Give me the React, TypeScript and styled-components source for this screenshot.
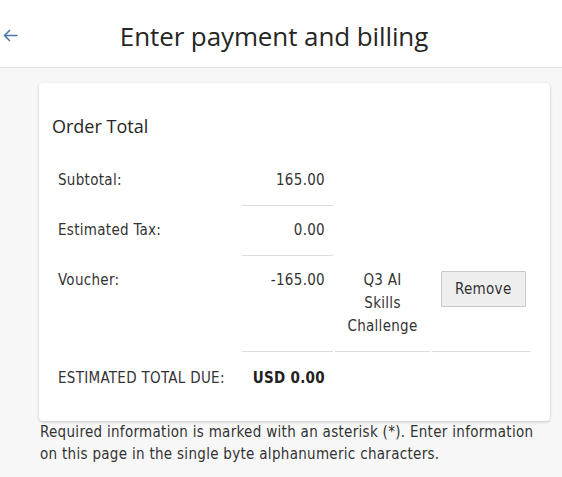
import React from "react";
import styled, { createGlobalStyle } from "styled-components";

const Global = createGlobalStyle`
  html, body { margin: 0; padding: 0; background: #f7f7f7; }
  body {
    font-family: "DejaVu Sans Condensed", "DejaVu Sans", sans-serif;
    letter-spacing: 0.3px;
    color: #333;
  }
`;

const Header = styled.header`
  box-sizing: border-box;
  height: 68px;
  padding-top: 4px;
  background: #fff;
  border-bottom: 1px solid #e2e2e2;
  display: flex;
  align-items: center;
`;

const BackButton = styled.button`
  border: 0;
  background: none;
  padding: 0;
  margin: 0 0 0 3px;
  width: 15px;
  height: 16px;
  display: flex;
  align-items: center;
  justify-content: center;
  cursor: pointer;
  color: #4b79a6;
`;

const Title = styled.h1`
  flex: 1;
  margin: 0 0 0 -18px;
  padding-right: 14px;
  text-align: center;
  font-family: "Open Sans", "Noto Sans", sans-serif;
  font-weight: 400;
  font-size: 26px;
  letter-spacing: -0.1px;
  color: #262626;
`;

const Main = styled.main`
  padding: 15px 12px 20px 39px;
`;

const Card = styled.section`
  background: #fff;
  border-radius: 4px;
  box-shadow: 0 1px 3px rgba(0, 0, 0, 0.22);
  padding: 29px 16px 15px 13px;
`;

const CardTitle = styled.h2`
  margin: 0 0 16px 0;
  font-family: "Open Sans", "Noto Sans", sans-serif;
  font-weight: 400;
  font-size: 18px;
  line-height: 28px;
  letter-spacing: 0;
  color: #262626;
`;

const Table = styled.table`
  border-collapse: separate;
  border-spacing: 2px;
  table-layout: fixed;
  width: 481px;
  font-size: 15px;
  line-height: 23px;
  color: #333;
`;

const Cell = styled.td<{ $ruled?: boolean; $align?: "left" | "right" | "center"; $w?: number }>`
  box-sizing: border-box;
  padding: 11px 8px 13px ${(p) => (p.$align === "center" ? "8px" : "4px")};
  vertical-align: top;
  text-align: ${(p) => p.$align || "left"};
  border-bottom: 1px solid ${(p) => (p.$ruled ? "#dedede" : "transparent")};
  ${(p) => (p.$w ? `width: ${p.$w}px;` : "")}
`;

const TotalCell = styled(Cell)`
  padding-top: 13px;
`;

const Strong = styled.strong`
  font-weight: 700;
  color: #222;
`;

const RemoveButton = styled.button`
  display: block;
  margin: 2px 0 0 5px;
  height: 36px;
  padding: 0 13px;
  background: #eeeeee;
  border: 1px solid #c9c9c9;
  border-radius: 1px;
  font-family: "DejaVu Sans Condensed", "DejaVu Sans", sans-serif;
  font-size: 15px;
  letter-spacing: 0.3px;
  color: #333;
  cursor: pointer;
`;

const Note = styled.p`
  margin: 0;
  padding-left: 1px;
  font-size: 15px;
  line-height: 22px;
  color: #333;
`;

export default function App() {
  return (
    <>
      <Global />
      <Header>
        <BackButton aria-label="Back">
          <svg width="15" height="13" viewBox="0 0 15 13" fill="none" stroke="currentColor" strokeWidth="1.6" strokeLinecap="round" strokeLinejoin="round">
            <path d="M14 6.5H1.5M6.5 1.5L1.5 6.5L6.5 11.5" />
          </svg>
        </BackButton>
        <Title>Enter payment and billing</Title>
      </Header>
      <Main>
        <Card>
          <CardTitle>Order Total</CardTitle>
          <Table>
            <tbody>
              <tr>
                <Cell $w={186}>Subtotal:</Cell>
                <Cell $ruled $align="right" $w={91}>165.00</Cell>
                <Cell $w={95} />
                <Cell $w={99} />
              </tr>
              <tr>
                <Cell>Estimated Tax:</Cell>
                <Cell $ruled $align="right">0.00</Cell>
                <Cell />
                <Cell />
              </tr>
              <tr>
                <Cell>Voucher:</Cell>
                <Cell $ruled $align="right">-165.00</Cell>
                <Cell $ruled $align="center">Q3 AI Skills Challenge</Cell>
                <Cell $ruled>
                  <RemoveButton>Remove</RemoveButton>
                </Cell>
              </tr>
              <tr>
                <TotalCell>ESTIMATED TOTAL DUE:</TotalCell>
                <TotalCell $align="right">
                  <Strong>USD 0.00</Strong>
                </TotalCell>
                <TotalCell />
                <TotalCell />
              </tr>
            </tbody>
          </Table>
        </Card>
        <Note>
          Required information is marked with an asterisk (*). Enter information on this page in the single byte alphanumeric characters.
        </Note>
      </Main>
    </>
  );
}
